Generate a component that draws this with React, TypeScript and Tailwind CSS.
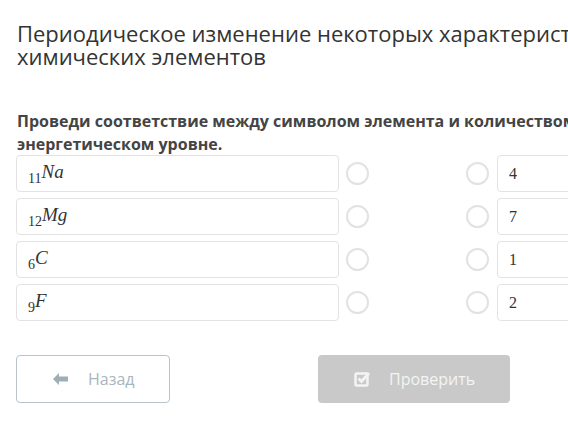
import React from "react";

const left = [
  { n: "11", s: "Na" },
  { n: "12", s: "Mg" },
  { n: "6", s: "C" },
  { n: "9", s: "F" },
];
const right = ["4", "7", "1", "2"];

function Circle() {
  return <div className="w-[23px] h-[23px] rounded-full border-2 border-[#e2e2e2] bg-white shrink-0" />;
}

export default function App() {
  return (
    <div className="w-[568px] h-[424px] overflow-hidden bg-white" style={{ fontFamily: '"Open Sans", sans-serif' }}>
      <div className="w-[800px] pl-[17px] pt-[22px]">
        <h1 className="text-[22px] leading-[23px] text-[#333] font-normal">
          Периодическое изменение некоторых характеристик
          <br />
          химических элементов
        </h1>
        <p className="mt-[42px] text-[16px] leading-[23px] font-bold text-[#444]">
          Проведи соответствие между символом элемента и количеством электронов на внешнем
          <br />
          энергетическом уровне.
        </p>
        <div className="flex flex-col gap-[6px] -mt-[1px] -ml-[1px]">
          {left.map((l, i) => (
            <div key={i} className="flex items-center h-[37px]">
              <div className="w-[323px] h-full border border-[#e3e3e3] rounded-[4px] flex items-center pl-[11px] text-[#333]" style={{ fontFamily: '"Liberation Serif", serif' }}>
                <span className="text-[14px] relative top-[5px]">{l.n}</span>
                <span className="text-[19px] italic relative -top-[1px]">{l.s}</span>
              </div>
              <div className="ml-[7px]"><Circle /></div>
              <div className="ml-[97px]"><Circle /></div>
              <div className="ml-[8px] w-[200px] h-full border border-[#e3e3e3] rounded-[4px] flex items-center pl-[11px] text-[16px] text-[#333]" style={{ fontFamily: '"Liberation Serif", serif' }}>
                {right[i]}
              </div>
            </div>
          ))}
        </div>
        <div className="flex mt-[34px] -ml-[1px]">
          <button className="w-[154px] h-[48px] border border-[#b9c3ca] rounded-[4px] flex items-center pl-[35px] text-[16px] text-[#a9b5be]">
            <svg width="17" height="14" viewBox="0 0 17 14" className="mr-[19px]">
              <path d="M7 1 L1 7 L7 13 L7 9.5 L16 9.5 L16 4.5 L7 4.5 Z" fill="#9fadb7" />
            </svg>
            Назад
          </button>
          <button className="ml-[148px] w-[192px] h-[48px] rounded-[4px] bg-[#c9c9c9] flex items-center pl-[36px] text-[16px] text-[#f4f4f4]">
            <svg width="17" height="16" viewBox="0 0 17 16" className="mr-[18px]">
              <rect x="1.5" y="2.5" width="12" height="12" rx="1" fill="none" stroke="#f4f4f4" strokeWidth="2.5" />
              <path d="M4.5 7.5 L7.5 10.5 L15 2" fill="none" stroke="#f4f4f4" strokeWidth="2.8" />
            </svg>
            Проверить
          </button>
        </div>
      </div>
    </div>
  );
}
